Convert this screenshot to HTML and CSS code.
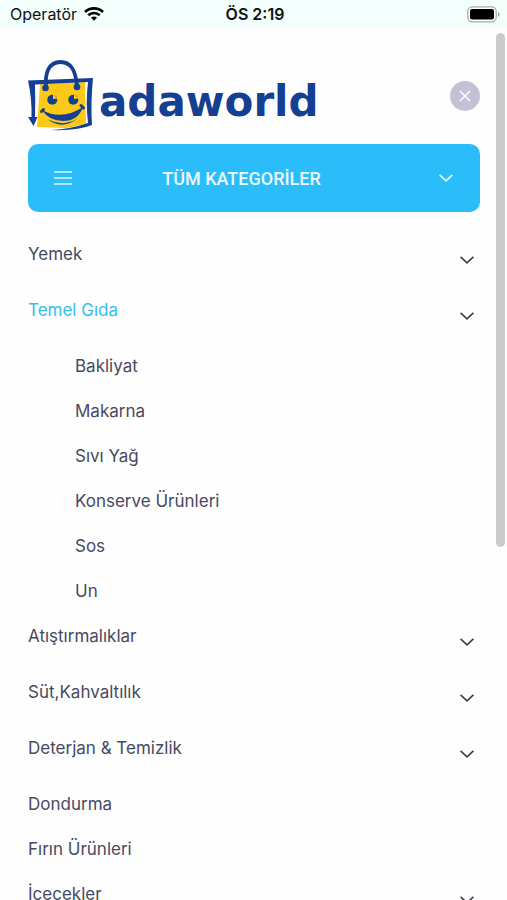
FILE: index.html
```html
<!DOCTYPE html>
<html lang="tr">
<head>
<meta charset="utf-8">
<meta name="viewport" content="width=device-width, initial-scale=1">
<title>adaworld</title>
<link rel="stylesheet" href="styles.css">
</head>
<body>
<div class="screen">
  <header class="status">
    <div class="carrier">
      <span>Operatör</span>
      <svg width="20" height="14" viewBox="0 0 20 14" fill="none" stroke="#000" stroke-width="2.6" aria-hidden="true">
        <path d="M1 5C6 .2 14 .2 19 5"/>
        <path d="M4.3 8.3C7.5 5.3 12.500 5.300 15.700 8.300"/>
        <path d="M10 13.800 7 10.800Q10 8.300 13 10.800Z" fill="#000" stroke="none"/>
      </svg>
    </div>
    <span class="time">ÖS 2:19</span>
    <svg class="battery" width="33" height="17" viewBox="0 0 33 17" aria-hidden="true">
      <rect x=".8" y=".8" width="28.400" height="15" rx="4.500" fill="#fff" stroke="#a5aaa8" stroke-width="1.300"/>
      <rect x="3" y="3" width="24" height="10.600" rx="2" fill="#000"/>
      <path d="M31 6v5q1.500-.8 1.500-2.500T31 6Z" fill="#999"/>
    </svg>
  </header>
  <main class="panel">
    <div class="top">
      <a class="logo" href="#" aria-label="adaworld">
        <svg width="66" height="72" viewBox="0 0 66 72" fill="none" aria-hidden="true">
          <path d="M12 24 57 22 58 64 39 68 9 67Z" fill="#fcc917"/>
          <path d="M0 20.500 65 18Q62.500 44 64 65Q50 71 23 70Q43 69 60 63Q57.500 43 60 22L7 24.500Q7.500 42 7 57L9.500 57 5.500 66 0 57 3.500 57Q4 38 0 20.500Z" fill="#153f92"/>
          <path d="M18 27C17 14 20 2 32.500 2S48 14 49 26" stroke="#153f92" stroke-width="3.800"/>
          <circle cx="17.500" cy="28" r="3.300" fill="#153f92"/>
          <circle cx="49" cy="27" r="3.300" fill="#153f92"/>
          <circle cx="24.300" cy="39.700" r="5" fill="#153f92"/>
          <circle cx="45.300" cy="39.700" r="5" fill="#153f92"/>
          <path d="M25 39V34L30 38.500Z M46 39V34L51 38.500Z" fill="#fcc917"/>
          <path d="M14 50Q34 61 55 47Q50 61 35 61Q21 61 14 50Z" fill="#153f92"/>
          <path d="M13.500 51.500 15.500 49.500M53 45.500 55.500 48" stroke="#153f92" stroke-width="3" stroke-linecap="round"/>
          <path d="M20 59.500Q35 67 49 59Q34 70 20 59.500Z" fill="#153f92"/>
        </svg>
        <span class="wordmark">adaworld</span>
      </a>
      <button class="close" type="button" aria-label="Kapat">
        <svg width="12" height="12" viewBox="0 0 12 12" fill="none" stroke="#fff" stroke-width="1.500" aria-hidden="true"><path d="m1 1 10 10M11 1 1 11"/></svg>
      </button>
    </div>
    <button class="all" type="button">
      <svg width="18" height="14" viewBox="0 0 18 14" stroke="#d5f6ff" stroke-width="1.400" aria-hidden="true"><path d="M0 1h18M0 7h18M0 13h18"/></svg>
      <span>TÜM KATEGORİLER</span>
      <svg width="14" height="8" viewBox="0 0 14 8" fill="none" stroke="#eafaff" stroke-width="1.600" aria-hidden="true"><path d="m.6.8 6.400 6 6.400-6"/></svg>
    </button>
    <nav>
      <ul class="menu">
        <li><div class="row"><a href="#">Yemek</a><button class="toggle" type="button" aria-label="Yemek"><svg width="14" height="8" viewBox="0 0 14 8"><path d="m.6.8 6.400 6 6.400-6"/></svg></button></div></li>
        <li>
          <div class="row"><a class="active" href="#">Temel Gıda</a><button class="toggle" type="button" aria-label="Temel Gıda"><svg width="14" height="8" viewBox="0 0 14 8"><path d="m.6.8 6.400 6 6.400-6"/></svg></button></div>
          <ul class="submenu">
            <li><a href="#">Bakliyat</a></li>
            <li><a href="#">Makarna</a></li>
            <li><a href="#">Sıvı Yağ</a></li>
            <li><a href="#">Konserve Ürünleri</a></li>
            <li><a href="#">Sos</a></li>
            <li><a href="#">Un</a></li>
          </ul>
        </li>
        <li><div class="row"><a href="#">Atıştırmalıklar</a><button class="toggle" type="button" aria-label="Atıştırmalıklar"><svg width="14" height="8" viewBox="0 0 14 8"><path d="m.6.8 6.400 6 6.400-6"/></svg></button></div></li>
        <li><div class="row"><a href="#">Süt,Kahvaltılık</a><button class="toggle" type="button" aria-label="Süt,Kahvaltılık"><svg width="14" height="8" viewBox="0 0 14 8"><path d="m.6.8 6.400 6 6.400-6"/></svg></button></div></li>
        <li><div class="row"><a href="#">Deterjan &amp; Temizlik</a><button class="toggle" type="button" aria-label="Deterjan &amp; Temizlik"><svg width="14" height="8" viewBox="0 0 14 8"><path d="m.6.8 6.400 6 6.400-6"/></svg></button></div></li>
        <li><a href="#">Dondurma</a></li>
        <li><a href="#">Fırın Ürünleri</a></li>
        <li><div class="row"><a href="#">İçecekler</a><button class="toggle" type="button" aria-label="İçecekler"><svg width="14" height="8" viewBox="0 0 14 8"><path d="m.6.8 6.400 6 6.400-6"/></svg></button></div></li>
      </ul>
    </nav>
    <div class="thumb"></div>
  </main>
</div>
</body>
</html>
```
FILE: styles.css
```css
* {
  box-sizing: border-box;
}

body {
  margin: 0;
  background: #fefefe;
  color: #474a60;
  font-family: Inter, "Liberation Sans", sans-serif;
  font-size: 17px;
}

a {
  color: inherit;
  text-decoration: none;
}

button {
  border: 0;
  padding: 0;
  background: none;
  font: inherit;
  cursor: pointer;
}

ul {
  list-style: none;
  margin: 0;
  padding: 0;
}

.screen {
  display: flex;
  flex-direction: column;
  height: 100vh;
  overflow: hidden;
}

.status {
  display: grid;
  grid-template-columns: 1fr auto 1fr;
  align-items: center;
  flex: none;
  height: 28px;
  padding: 0 7px 0 10px;
  background: #f3fffc;
  color: #111;
  font-size: 16px;
}

.carrier {
  display: flex;
  align-items: center;
  gap: 7px;
}

.time {
  font-weight: 600;
}

.battery {
  justify-self: end;
}

.panel {
  position: relative;
  flex: 1;
  min-height: 0;
  padding: 32px 27px 0 28px;
  overflow: hidden;
}

.top {
  display: flex;
  align-items: center;
  justify-content: space-between;
  height: 72px;
}

.logo {
  display: flex;
  align-items: center;
  gap: 5px;
}

.wordmark {
  padding-top: 12px;
  color: #153f92;
  font-family: "DejaVu Sans", sans-serif;
  font-size: 42px;
  font-weight: 700;
  line-height: 60px;
}

.close {
  display: flex;
  align-items: center;
  justify-content: center;
  width: 30px;
  height: 30px;
  border-radius: 50%;
  background: #c3c1d6;
}

.all {
  display: grid;
  grid-template-columns: 18px 1fr 14px;
  align-items: center;
  width: 100%;
  height: 68px;
  margin: 12px 0 20px;
  padding: 0 27px 0 26px;
  border-radius: 10px;
  background: #2bbdf9;
  color: #eafaff;
  font-family: Roboto, sans-serif;
  font-size: 18px;
  font-weight: 500;
}

.all span {
  padding-right: 28px;
}

.menu a {
  display: block;
  flex: 1;
  line-height: 45px;
}

.menu .active {
  color: #35bdf0;
}

.row {
  display: flex;
  height: 56px;
}

.toggle {
  width: 27px;
  height: 52px;
}

.toggle path {
  fill: none;
  stroke: #3d3e4c;
  stroke-width: 1.6px;
}

.submenu {
  padding-left: 47px;
}

.thumb {
  position: absolute;
  top: 5px;
  right: 2px;
  width: 9px;
  height: 59%;
  border-radius: 5px;
  background: #cbcbcb;
}
```
